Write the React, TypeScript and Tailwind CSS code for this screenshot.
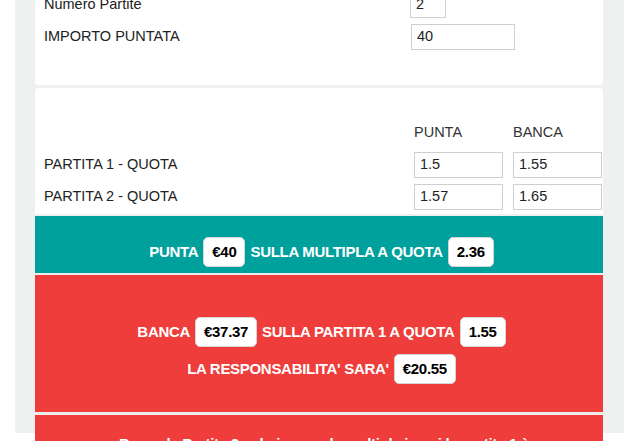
import React from "react";

const font = { fontFamily: '"Liberation Sans", Arial, Helvetica, sans-serif' };

function Field({ value, w }: { value: string; w: string }) {
  return (
    <div
      className={`${w} h-[26px] border border-[#cfcfcf] bg-white flex items-center pl-[5px] text-[14.5px] text-[#222]`}
    >
      {value}
    </div>
  );
}

function Badge({ children }: { children: React.ReactNode }) {
  return (
    <span className="inline-flex items-center h-[30px] px-[8px] mx-[5px] rounded-[5px] bg-white border border-[#d5d5d5] text-black text-[15px] font-bold tracking-[-0.3px]">
      {children}
    </span>
  );
}

export default function App() {
  return (
    <div style={font} className="w-[637px] h-[441px] overflow-hidden bg-white">
      <div className="ml-[15px] w-[609px] h-full bg-[#eff1f0] pl-[20px] pr-[21px]">
        <div className="-mt-[8px] flex flex-col">
          {/* Card 1 */}
          <div className="bg-white rounded-b-[4px] pl-[9px] pb-[35px] flex flex-col gap-[6px] text-[14.5px] text-[#222]">
            <div className="flex items-center h-[26px]">
              <div className="w-[366px]">Numero Partite</div>
              <Field value="2" w="w-[36px]" />
            </div>
            <div className="flex items-center h-[26px]">
              <div className="w-[367px]">IMPORTO PUNTATA</div>
              <Field value="40" w="w-[104px]" />
            </div>
          </div>
          {/* Card 2 */}
          <div className="mt-[3px] bg-white rounded-t-[4px] pl-[9px] pt-[35px] pb-[4px] text-[14.5px] text-[#222]">
            <div className="flex items-center h-[20px] mb-[9px]">
              <div className="w-[370px]" />
              <div className="w-[99px] text-[#333]">PUNTA</div>
              <div className="text-[#333]">BANCA</div>
            </div>
            <div className="flex flex-col gap-[6px]">
              <div className="flex items-center h-[26px]">
                <div className="w-[370px]">PARTITA 1 - QUOTA</div>
                <Field value="1.5" w="w-[89px]" />
                <div className="w-[10px]" />
                <Field value="1.55" w="w-[89px]" />
              </div>
              <div className="flex items-center h-[26px]">
                <div className="w-[370px]">PARTITA 2 - QUOTA</div>
                <Field value="1.57" w="w-[89px]" />
                <div className="w-[10px]" />
                <Field value="1.65" w="w-[89px]" />
              </div>
            </div>
          </div>
          {/* Teal */}
          <div className="mt-[2px] bg-[#00a09d] pl-[10px] pt-[21px] pb-[6px] flex justify-center items-center text-white text-[15px] font-bold tracking-[-0.3px]">
            <span>PUNTA</span>
            <Badge>€40</Badge>
            <span>SULLA MULTIPLA A QUOTA</span>
            <Badge>2.36</Badge>
          </div>
          <div className="h-[2px] bg-[#ececec]" />
          {/* Red 1 */}
          <div className="bg-[#ee3d3b] pl-[10px] pt-[42px] pb-[28px] flex flex-col items-center gap-[7px] text-white text-[15px] font-bold tracking-[-0.3px]">
            <div className="flex items-center">
              <span>BANCA</span>
              <Badge>€37.37</Badge>
              <span>SULLA PARTITA 1 A QUOTA</span>
              <Badge>1.55</Badge>
            </div>
            <div className="flex items-center">
              <span>LA RESPONSABILITA' SARA'</span>
              <Badge>€20.55</Badge>
            </div>
          </div>
          <div className="h-[3px] bg-[#ececec]" />
          {/* Red 2 */}
          <div className="bg-[#ee3d3b] pl-[10px] pt-[18px] h-[80px] text-center text-white text-[15px] font-bold tracking-[-0.3px]">
            Banca la Partita 2 solo in caso la multipla in cui la partita 1 è
          </div>
        </div>
      </div>
    </div>
  );
}
